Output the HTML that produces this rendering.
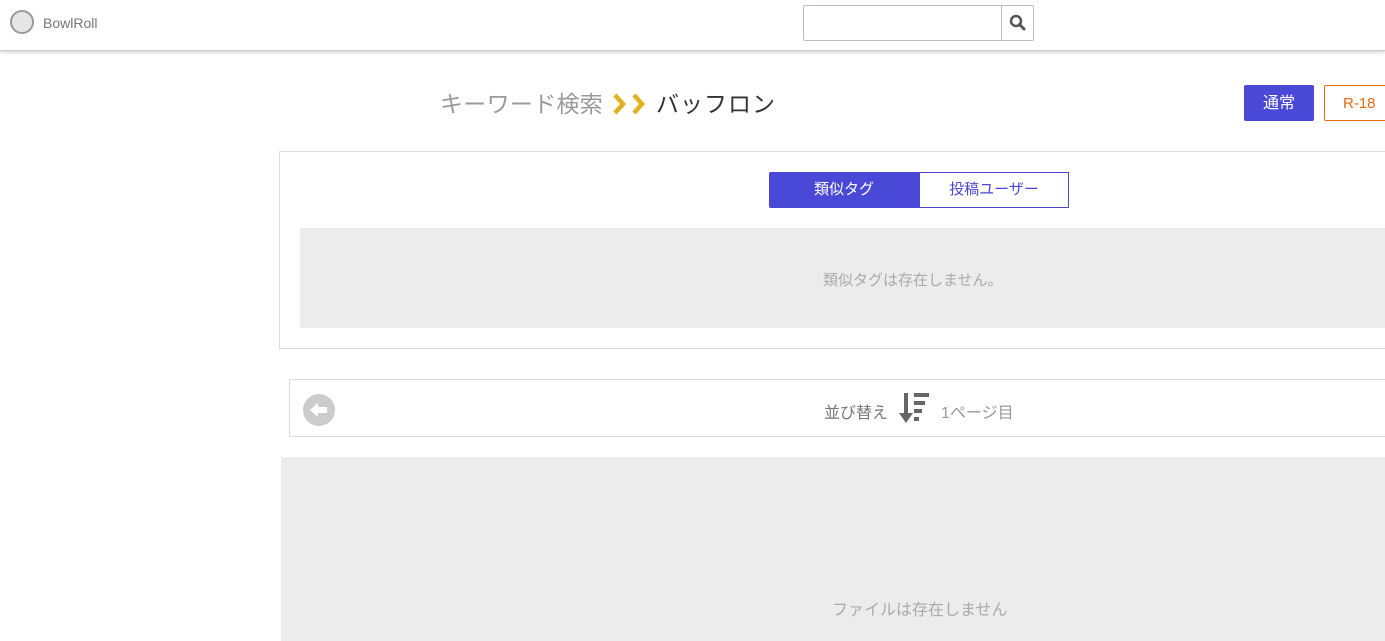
<!DOCTYPE html>
<html><head><meta charset="utf-8"><style>
body{margin:0;width:1385px;height:641px;overflow:hidden;background:#fff;font-family:"Liberation Sans","Noto Sans CJK JP",sans-serif;position:relative}
.hdr{position:absolute;left:0;top:0;width:1385px;height:50px;background:#fff;border-bottom:1px solid #ccc;box-shadow:0 2px 3px rgba(0,0,0,.15)}
.abs{position:absolute}
</style></head><body>
<div class="hdr">
 <div class="abs" style="left:10px;top:10px;width:24px;height:24px;border-radius:50%;background:#e6e6e6;border:2px solid #999;box-sizing:border-box"></div>
 <div class="abs" style="left:43px;top:15px;font-size:14px;color:#777">BowlRoll</div>
 <div class="abs" style="left:803px;top:5px;width:231px;height:36px;border:1px solid #bbc;box-sizing:border-box;border-radius:2px"></div>
 <div class="abs" style="left:1001px;top:5px;width:1px;height:36px;background:#bbc"></div>
 <svg class="abs" style="left:1009px;top:14px" width="18" height="18" viewBox="0 0 18 18"><circle cx="7" cy="7" r="5" fill="none" stroke="#555" stroke-width="2.5"/><line x1="10.5" y1="10.5" x2="15" y2="15" stroke="#555" stroke-width="3" stroke-linecap="round"/></svg>
</div>
<div class="abs" style="left:440px;top:85px;font-size:23px;color:#999;white-space:nowrap;letter-spacing:0.3px">キーワード検索</div>
<svg class="abs" style="left:612px;top:93px" width="36" height="22" viewBox="0 0 36 22"><path d="M3 2 L11 11 L3 20" fill="none" stroke="#e0b020" stroke-width="4.5"/><path d="M22 2 L30 11 L22 20" fill="none" stroke="#e0b020" stroke-width="4.5"/></svg>
<div class="abs" style="left:656px;top:85px;font-size:23px;color:#333;letter-spacing:1px;white-space:nowrap">バッフロン</div>
<div class="abs" style="left:1244px;top:85px;width:70px;height:36px;background:#4a48d6;border-radius:2px;color:#fff;font-size:16px;text-align:center;line-height:38px">通常</div>
<div class="abs" style="left:1324px;top:85px;width:70px;height:36px;border:1px solid #e86a10;box-sizing:border-box;border-radius:2px;color:#e86a10;font-size:15px;line-height:36px;padding-left:18px">R-18</div>
<div class="abs" style="left:279px;top:151px;width:1120px;height:198px;border:1px solid #ddd;box-sizing:border-box"></div>
<div class="abs" style="left:769px;top:172px;width:150px;height:36px;background:#4a48d6;color:#fff;font-size:15px;text-align:center;line-height:36px;border-radius:2px 0 0 2px">類似タグ</div>
<div class="abs" style="left:919px;top:172px;width:150px;height:36px;border:1px solid #4a48d6;box-sizing:border-box;color:#4a48d6;font-size:15px;text-align:center;line-height:34px">投稿ユーザー</div>
<div class="abs" style="left:300px;top:228px;width:1085px;height:100px;background:#ececec"></div>
<div class="abs" style="left:823px;top:269px;font-size:15px;color:#aaa">類似タグは存在しません。</div>
<div class="abs" style="left:289px;top:379px;width:1110px;height:58px;border:1px solid #ddd;box-sizing:border-box"></div>
<svg class="abs" style="left:303px;top:394px" width="32" height="32" viewBox="0 0 32 32"><circle cx="16" cy="16" r="16" fill="#ccc"/><path d="M7 16 L15 9 V13 H24 V19 H15 V23 Z" fill="#fff"/></svg>
<div class="abs" style="left:824px;top:399px;font-size:16px;color:#777">並び替え</div>
<svg class="abs" style="left:898px;top:393px" width="34" height="31" viewBox="0 0 34 31"><rect x="6" y="0" width="4" height="22" fill="#666"/><path d="M1 20 H15 L8 30 Z" fill="#666"/><rect x="16" y="0" width="15" height="4" fill="#666"/><rect x="16" y="8" width="11" height="4" fill="#666"/><rect x="16" y="16" width="8" height="4" fill="#666"/><rect x="16" y="24" width="5" height="4" fill="#666"/></svg>
<div class="abs" style="left:941px;top:399px;font-size:16px;color:#999">1ページ目</div>
<div class="abs" style="left:281px;top:457px;width:1104px;height:184px;background:#ececec"></div>
<div class="abs" style="left:832px;top:596px;font-size:16px;color:#aaa">ファイルは存在しません</div>
</body></html>
